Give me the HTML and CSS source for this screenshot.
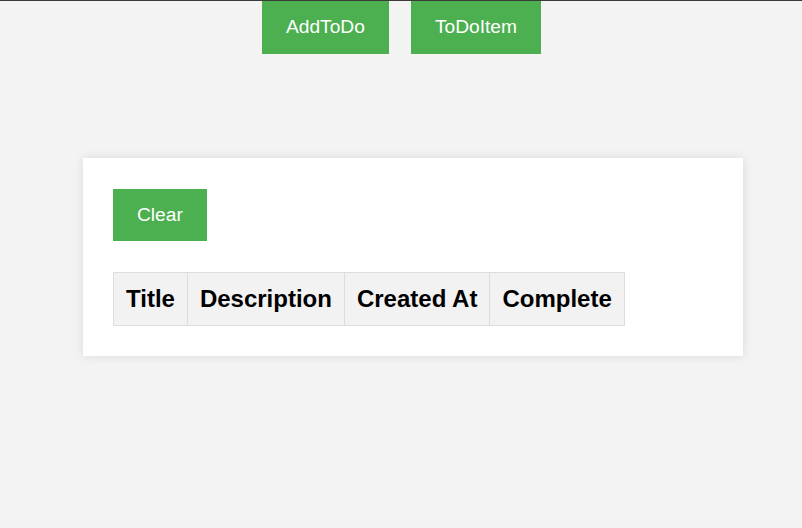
FILE: index.html
```html
<!DOCTYPE html>
<html>
<head>
<meta charset="utf-8">
<link rel="stylesheet" href="styles.css">
</head>
<body>
<nav class="nav">
  <button class="btn">AddToDo</button>
  <button class="btn">ToDoItem</button>
</nav>
<main class="card">
  <button class="btn">Clear</button>
  <table class="todo-table">
    <thead>
      <tr>
        <th>Title</th>
        <th>Description</th>
        <th>Created At</th>
        <th>Complete</th>
      </tr>
    </thead>
  </table>
</main>
</body>
</html>
```
FILE: styles.css
```css
html, body {
  margin: 0;
  padding: 0;
}
body {
  background: #f3f3f3;
  font-family: "Liberation Sans", Arial, sans-serif;
  border-top: 1px solid #3a3a3a;
  height: 527px;
  overflow: hidden;
}
.nav {
  display: flex;
  justify-content: center;
  gap: 22px;
  padding-left: 1px;
}
.btn {
  background: #4caf50;
  color: #fff;
  border: none;
  font-family: "Liberation Sans", Arial, sans-serif;
  font-size: 19.2px;
  line-height: 22px;
  padding: 15px 24px 16px;
  cursor: pointer;
  display: block;
}
.card {
  display: flex;
  flex-direction: column;
  align-items: flex-start;
  gap: 31px;
  width: 600px;
  margin: 104px 0 0 83px;
  padding: 31px 30px 30px;
  background: #fff;
  box-shadow: 0 0 10px rgba(0, 0, 0, 0.1);
}
.card .btn {
  padding: 15px 24px;
}
.todo-table {
  border-collapse: collapse;
}
.todo-table th {
  background: #f2f2f2;
  border: 1px solid #ddd;
  font-size: 24px;
  font-weight: bold;
  padding: 12px;
  line-height: 28px;
  text-align: left;
}
```
